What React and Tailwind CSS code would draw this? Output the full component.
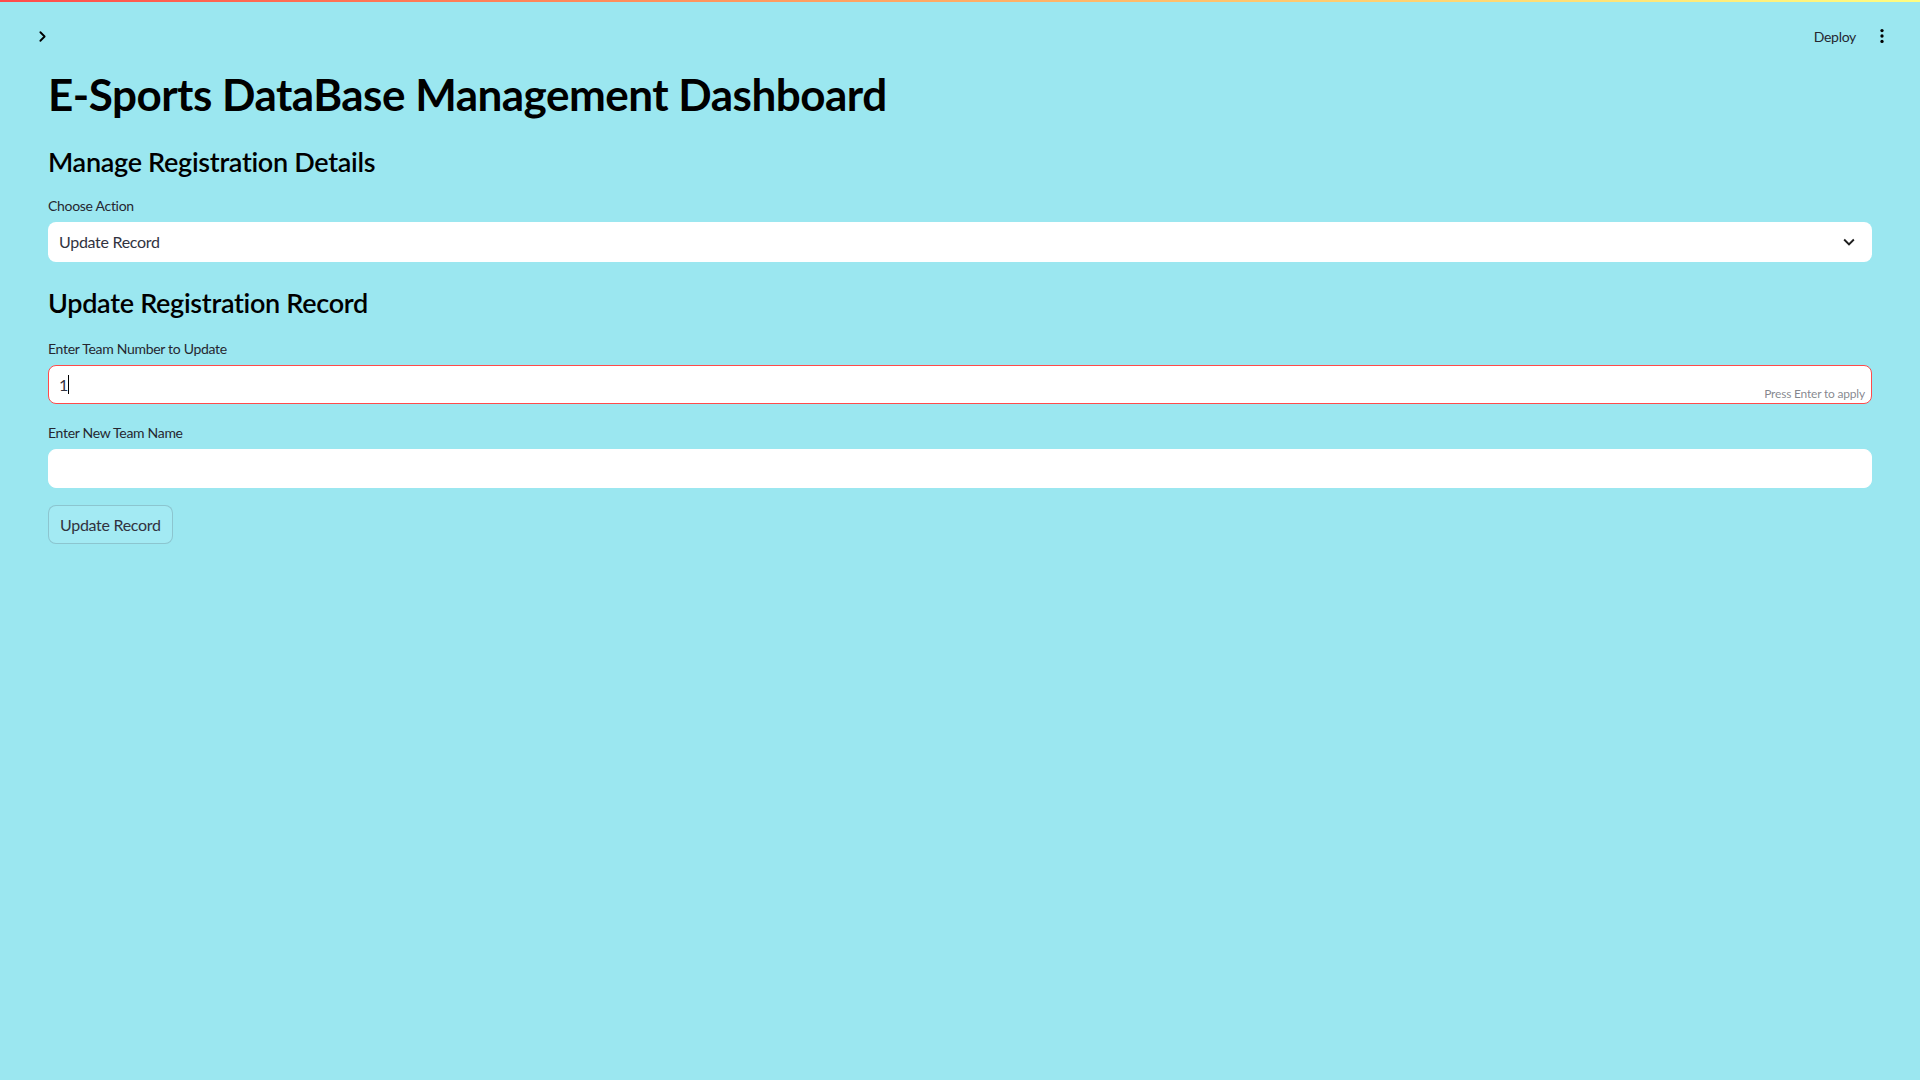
import React, { useState } from 'react';
import { ChevronRight } from 'lucide-react';

const font = { fontFamily: '"Lato", "Liberation Sans", sans-serif' };

function Field({ label, value, focused, className = '' }) {
  return (
    <div className={className}>
      <div className="text-[14px] leading-[20px] tracking-[-0.3px] text-[#262730]">{label}</div>
      <div
        className={`relative mt-[6px] h-[39px] rounded-lg bg-white flex items-center px-[10px] border ${
          focused ? 'border-[#ff4b4b]' : 'border-white'
        }`}
      >
        <div className="flex items-center text-[16px] text-[#31333f]">
          {value}
          {focused && <span className="w-px h-[19px] bg-black" />}
        </div>
        {focused && (
          <span className="absolute right-[6px] bottom-[2px] text-[12px] leading-[14px] tracking-[-0.2px] text-[#31333f]/60">
            Press Enter to apply
          </span>
        )}
      </div>
    </div>
  );
}

export default function App() {
  const [action] = useState('Update Record');
  const [teamNo] = useState('1');
  const [teamName] = useState('');

  return (
    <div className="min-h-screen w-full bg-[#9be7f0] text-[#31333f]" style={font}>
      <div className="h-[2px] w-full bg-gradient-to-r from-[#ff4b4b] to-[#fffd80]" />

      {/* header */}
      <div className="h-[68px] flex items-center justify-between pl-[34px] pr-[28px]">
        <ChevronRight size={17} strokeWidth={2.6} className="text-black" />
        <div className="flex items-center gap-[16px]">
          <span className="text-[14px] tracking-[-0.3px] text-[#262730]">Deploy</span>
          <svg width="20" height="20" viewBox="0 0 24 24" className="text-black">
            <circle cx="12" cy="5.5" r="2" fill="currentColor" />
            <circle cx="12" cy="12" r="2" fill="currentColor" />
            <circle cx="12" cy="18.5" r="2" fill="currentColor" />
          </svg>
        </div>
      </div>

      <div className="px-12">
        <h1 className="-mt-[2px] text-[44px] leading-[53px] font-bold text-black tracking-[-0.5px]">
          E-Sports DataBase Management Dashboard
        </h1>

        <h3 className="mt-[24px] text-[27px] leading-[34px] font-semibold text-black tracking-[-0.3px]">
          Manage Registration Details
        </h3>

        <div className="mt-[17px]">
          <div className="text-[14px] leading-[20px] tracking-[-0.3px] text-[#262730]">Choose Action</div>
          <div className="mt-[6px] h-[40px] rounded-lg bg-white flex items-center justify-between pl-[11px] pr-[12px]">
            <span className="text-[16px] tracking-[-0.3px] text-[#31333f]">{action}</span>
            <svg width="22" height="22" viewBox="0 0 24 24" className="text-[#1f1f1f]">
              <path fill="currentColor" d="M7.41 8.59 12 13.17l4.59-4.58L18 10l-6 6-6-6 1.41-1.41z" />
            </svg>
          </div>
        </div>

        <h3 className="mt-[24px] text-[27px] leading-[34px] font-semibold text-black tracking-[-0.3px]">
          Update Registration Record
        </h3>

        <Field className="mt-[19px]" label="Enter Team Number to Update" value={teamNo} focused />
        <Field className="mt-[19px]" label="Enter New Team Name" value={teamName} />

        <button className="mt-[17px] h-[39px] px-[11px] rounded-lg border border-[#31333f]/20 bg-[#a3eaf3] text-[16px] tracking-[-0.3px] text-[#31333f]">
          Update Record
        </button>
      </div>
    </div>
  );
}
